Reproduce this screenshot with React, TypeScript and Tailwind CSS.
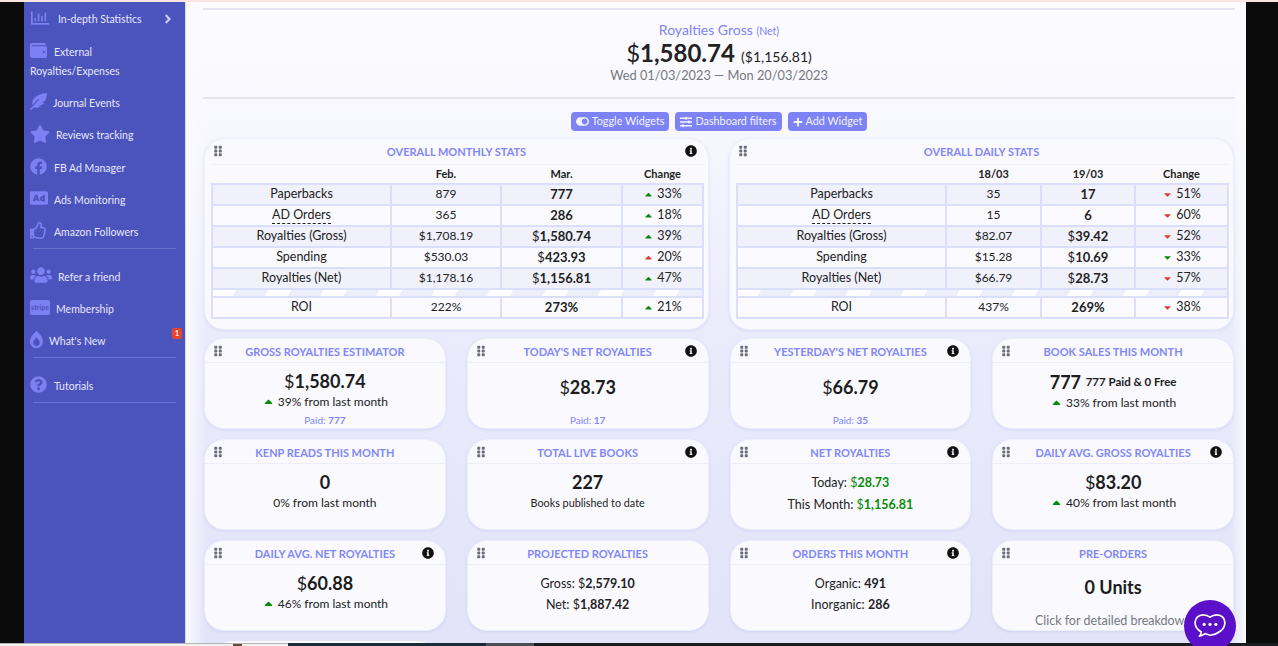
import type { ReactNode } from 'react';
import {
  FaAd,
  FaAngleRight,
  FaBurn,
  FaCaretDown,
  FaCaretUp,
  FaFacebook,
  FaFeatherAlt,
  FaGripVertical,
  FaInfoCircle,
  FaPlus,
  FaQuestionCircle,
  FaRegChartBar,
  FaRegThumbsUp,
  FaSlidersH,
  FaStar,
  FaToggleOn,
  FaUsers,
  FaWallet,
} from 'react-icons/fa';

const Money = ({ v }: { v: string }) => (
  <>
    <span className="font-normal">$</span>
    <b className="font-bold">{v}</b>
  </>
);

const Up = () => <FaCaretUp className="inline size-[13px] text-[#0a8a0a] align-[-2px]" />;

const SideItem = ({
  icon,
  label,
  gap,
  h = 'h-[32px]',
}: {
  icon: ReactNode;
  label: string;
  gap: string;
  h?: string;
}) => (
  <div className={`flex items-center pl-[6px] ${h} ${gap}`}>
    <span className="flex shrink-0 -translate-y-[2px] justify-center text-[#7b80f2]">{icon}</span>
    <span className="mt-[1px] text-[10.5px] text-[#e6e7fb]">{label}</span>
  </div>
);

const Sidebar = () => (
  <aside className="w-[161px] shrink-0 bg-[#4b53bc] pt-[2px] font-['Lato',sans-serif]">
    <div className="flex h-[32px] items-center pl-[7px] pr-[10px] text-[#7b80f2]">
      <FaRegChartBar className="size-[18px] -translate-y-[2px]" />
      <span className="ml-[9px] flex-1 text-[10.5px] text-[#e6e7fb]">In-depth Statistics</span>
      <FaAngleRight className="size-[14px] -translate-y-[1px] text-[#c9cbf8]" />
    </div>
    <div className="h-[51px] pl-[6px] pt-[8px]">
      <div className="flex items-center gap-[7px]">
        <FaWallet className="size-[17px] -translate-y-[2px] text-[#7b80f2]" />
        <span className="text-[10.5px] text-[#e6e7fb]">External</span>
      </div>
      <div className="mt-[3px] text-[10.5px] text-[#e6e7fb]">Royalties/Expenses</div>
    </div>
    <SideItem gap="gap-[6px]" label="Journal Events" icon={<FaFeatherAlt className="size-[17px]" />} />
    <SideItem gap="gap-[6px]" h="h-[33px]" label="Reviews tracking" icon={<FaStar className="size-[20px]" />} />
    <SideItem gap="gap-[7px]" label="FB Ad Manager" icon={<FaFacebook className="size-[17px]" />} />
    <SideItem gap="gap-[6px]" label="Ads Monitoring" icon={<FaAd className="size-[18px]" />} />
    <SideItem gap="gap-[7px]" label="Amazon Followers" icon={<FaRegThumbsUp className="size-[17px]" />} />
    <div className="mx-[9px] mb-[12px] h-px bg-[#6a70cf]" />
    <SideItem gap="gap-[6px]" label="Refer a friend" icon={<FaUsers className="size-[22px]" />} />
    <SideItem
      gap="gap-[6px]"
      label="Membership"
      icon={
        <span className="flex h-[15px] w-[20px] items-center justify-center rounded-[2px] bg-[#7b80f2] text-[7px] font-bold text-[#4b53bc]">
          stripe
        </span>
      }
    />
    <div className="relative">
      <SideItem gap="gap-[6px]" label="What's New" icon={<FaBurn className="h-[19px] w-[13px]" />} />
      <span className="absolute right-[3px] top-[3px] flex h-[11px] w-[10px] items-center justify-center rounded-[2px] bg-[#e8432f] text-[7px] font-bold text-white">
        1
      </span>
    </div>
    <div className="mx-[9px] mb-[12px] h-px bg-[#6a70cf]" />
    <SideItem gap="gap-[7px]" label="Tutorials" icon={<FaQuestionCircle className="size-[17px]" />} />
    <div className="mx-[9px] h-px bg-[#6a70cf]" />
  </aside>
);

const TopButton = ({ icon, label }: { icon: ReactNode; label: string }) => (
  <button className="flex h-[19px] items-center gap-[3px] rounded-[4px] bg-[#7d83f4] px-[5px] text-[10.8px] text-[#f2f3ff]">
    {icon}
    {label}
  </button>
);

type Row = {
  label: string;
  a: ReactNode;
  b: ReactNode;
  pct: string;
  up: boolean;
  good: boolean;
  dotted?: boolean;
};

const monthly: Row[] = [
  { label: 'Paperbacks', a: '879', b: <b>777</b>, pct: '33%', up: true, good: true },
  { label: 'AD Orders', a: '365', b: <b>286</b>, pct: '18%', up: true, good: true, dotted: true },
  { label: 'Royalties (Gross)', a: '$1,708.19', b: <Money v="1,580.74" />, pct: '39%', up: true, good: true },
  { label: 'Spending', a: '$530.03', b: <Money v="423.93" />, pct: '20%', up: true, good: false },
  { label: 'Royalties (Net)', a: '$1,178.16', b: <Money v="1,156.81" />, pct: '47%', up: true, good: true },
];
const daily: Row[] = [
  { label: 'Paperbacks', a: '35', b: <b>17</b>, pct: '51%', up: false, good: false },
  { label: 'AD Orders', a: '15', b: <b>6</b>, pct: '60%', up: false, good: false, dotted: true },
  { label: 'Royalties (Gross)', a: '$82.07', b: <Money v="39.42" />, pct: '52%', up: false, good: false },
  { label: 'Spending', a: '$15.28', b: <Money v="10.69" />, pct: '33%', up: false, good: true },
  { label: 'Royalties (Net)', a: '$66.79', b: <Money v="28.73" />, pct: '57%', up: false, good: false },
];

const Delta = ({ pct, up, good }: { pct: string; up: boolean; good: boolean }) => {
  const color = good ? 'text-[#0a8a0a]' : 'text-[#e0392b]';
  return (
    <span className="inline-flex translate-y-[1px] items-center gap-[3px]">
      {up ? <FaCaretUp className={`size-[11px] ${color}`} /> : <FaCaretDown className={`size-[11px] ${color}`} />}
      {pct}
    </span>
  );
};

const cell = 'border-2 border-[#dcdffc] p-0 text-center font-normal';

const StatTable = ({
  title,
  heads,
  rows,
  roi,
  cols,
  info,
}: {
  title: string;
  heads: string[];
  rows: Row[];
  roi: { a: string; b: string; pct: string; up: boolean };
  cols: string[];
  info?: boolean;
}) => (
  <section className="h-[192px] rounded-[20px] border border-[#eceefb] bg-[#f9f9fe] px-[6px] shadow-[0_1px_3px_rgba(90,90,200,0.12)]">
    <div className="relative flex h-[25px] items-center justify-center pt-[2px]">
      <FaGripVertical className="absolute left-[1px] top-[6px] size-[12px] text-[#6b6d78]" />
      <span className="text-[11px] font-bold uppercase text-[#8187f7]">{title}</span>
      {info && <FaInfoCircle className="absolute right-[5px] top-[6px] size-[12px] text-[#111]" />}
    </div>
    <table className="w-full table-fixed border-collapse text-[12.5px] leading-none text-[#222]">
      <colgroup>
        {cols.map((c) => (
          <col key={c} className={c} />
        ))}
      </colgroup>
      <thead>
        <tr className="h-[19px] border-t border-[#eef0fa]">
          <th />
          {heads.map((h) => (
            <th key={h} className="text-[11px] font-bold">
              {h}
            </th>
          ))}
        </tr>
      </thead>
      <tbody>
        {rows.map((r, i) => (
          <tr key={r.label} className={`h-[21px] ${i % 2 === 0 ? 'bg-[#f0f1fb]' : 'bg-[#fbfbff]'}`}>
            <td className={cell}>
              <span className={r.dotted ? 'border-b border-dashed border-[#222] pb-px' : ''}>{r.label}</span>
            </td>
            <td className={`${cell} text-[12px]`}>{r.a}</td>
            <td className={`${cell} text-[13px]`}>{r.b}</td>
            <td className={cell}>
              <Delta pct={r.pct} up={r.up} good={r.good} />
            </td>
          </tr>
        ))}
        <tr className="h-[8px]">
          <td
            colSpan={4}
            className="border-2 border-[#dcdffc] bg-[repeating-linear-gradient(120deg,#ffffff_0,#ffffff_20px,#eceefa_20px,#eceefa_48px)] p-0"
          />
        </tr>
        <tr className="h-[21px] bg-[#fbfbff]">
          <td className={cell}>ROI</td>
          <td className={`${cell} text-[12px]`}>{roi.a}</td>
          <td className={`${cell} text-[13px]`}>
            <b>{roi.b}</b>
          </td>
          <td className={cell}>
            <Delta pct={roi.pct} up={roi.up} good={roi.up} />
          </td>
        </tr>
      </tbody>
    </table>
  </section>
);

const Card = ({ title, info, children }: { title: string; info?: boolean; children: ReactNode }) => (
  <section className="flex h-[91px] flex-col rounded-[20px] border border-[#eceefb] bg-[#f9f9fe] shadow-[0_1px_3px_rgba(90,90,200,0.12)]">
    <div className="relative flex h-[24px] shrink-0 items-center justify-center border-b border-[#eceef8] pt-[3px]">
      <FaGripVertical className="absolute left-[7px] top-[6px] size-[12px] text-[#6b6d78]" />
      <span className="text-[11px] font-bold uppercase text-[#8187f7]">{title}</span>
      {info && <FaInfoCircle className="absolute right-[11px] top-[6px] size-[12px] text-[#111]" />}
    </div>
    <div className="flex flex-1 flex-col items-center text-[#222]">{children}</div>
  </section>
);

const Big = ({ children }: { children: ReactNode }) => (
  <div className="mt-[8px] text-[18px] leading-[21px] text-[#1c1c1c]">{children}</div>
);
const Sub = ({ children }: { children: ReactNode }) => (
  <div className="text-[12px] leading-[19px]">{children}</div>
);
const Paid = ({ n }: { n: string }) => (
  <div className="mt-[2px] text-[10px] leading-[14px] text-[#8187f7]">
    Paid: <b>{n}</b>
  </div>
);
const Green = ({ v }: { v: string }) => (
  <span className="text-[#0a8a0a]">
    <span className="font-normal">$</span>
    <b>{v}</b>
  </span>
);

const ChatBubble = () => (
  <svg viewBox="0 0 32 32" className="size-[34px]" fill="none" stroke="#fff" strokeWidth="1.6" strokeLinejoin="round">
    <path d="M9.500 5.500c3 0 5 1 6.500 2.200 1.600-1.200 3.600-2.200 6.500-2.200 4.600 0 7.500 3.200 7.500 7.400 0 6.600-7 11-13.500 11.800-2.300-.5-3.500-1-5-1.500-1.400 1-3.200 2-5.500 2.300 1-1 1.700-2.300 1.800-3.900C4.300 19.600 2 16.500 2 12.900 2 8.700 4.900 5.500 9.500 5.500z" />
    <g fill="#fff" stroke="none">
      <circle cx="10.500" cy="14.500" r="1.500" />
      <circle cx="16" cy="14.500" r="1.500" />
      <circle cx="21.500" cy="14.500" r="1.500" />
    </g>
  </svg>
);

export default function App() {
  return (
    <div className="relative flex h-[646px] w-[1278px] flex-col overflow-hidden bg-[#0b0b0b] font-['Lato',sans-serif]">
      <div className="h-[2px] shrink-0 bg-[#fde6e2]" />
      <div className="flex h-[641px] shrink-0 pl-[24px] pr-[32px]">
        <Sidebar />
        <main className="flex-1 overflow-hidden border-l border-[#d9daf5] bg-[linear-gradient(90deg,#fafaff_0,#fafaff00_20px,#fafaff00_calc(100%-14px),#fafaff_100%),linear-gradient(180deg,#fcfcff_0%,#f7f7fe_20%,#ebebfc_50%,#e3e3f9_100%)] pl-[17px] pr-[11px] pt-[6px]">
          <div className="h-[91px] border-y-2 border-[#e4e5f1] pt-[11px] text-center">
            <div className="text-[14px] leading-[18px] text-[#7d83f4]">
              Royalties Gross <span className="text-[10.5px]">(Net)</span>
            </div>
            <div className="text-[24px] leading-[25px] text-[#222]">
              $<b>1,580.74</b> <span className="text-[14px]">($1,156.81)</span>
            </div>
            <div className="-mt-[3px] text-[12.8px] leading-[18px] text-[#77787f]">
              Wed 01/03/2023 — Mon 20/03/2023
            </div>
          </div>
          <div className="mt-[13px] flex justify-center gap-[6px]">
            <TopButton icon={<FaToggleOn className="size-[13px]" />} label="Toggle Widgets" />
            <TopButton icon={<FaSlidersH className="size-[12px]" />} label="Dashboard filters" />
            <TopButton icon={<FaPlus className="size-[10px]" />} label="Add Widget" />
          </div>
          <div className="mt-[7px] grid grid-cols-2 gap-x-[20px] px-px">
            <StatTable
              title="Overall Monthly Stats"
              info
              heads={['Feb.', 'Mar.', 'Change']}
              rows={monthly}
              roi={{ a: '222%', b: '273%', pct: '21%', up: true }}
              cols={['w-[179px]', 'w-[110px]', 'w-[121px]', 'w-[81px]']}
            />
            <StatTable
              title="Overall Daily Stats"
              heads={['18/03', '19/03', 'Change']}
              rows={daily}
              roi={{ a: '437%', b: '269%', pct: '38%', up: false }}
              cols={['w-[209px]', 'w-[95px]', 'w-[94px]', 'w-[93px]']}
            />
          </div>
          <div className="mt-[8px] grid grid-cols-4 gap-x-[21px] gap-y-[10px] px-px">
            <Card title="Gross Royalties Estimator">
              <Big>
                <Money v="1,580.74" />
              </Big>
              <Sub>
                <Up /> 39% from last month
              </Sub>
              <Paid n="777" />
            </Card>
            <Card title="Today's Net Royalties" info>
              <Big>
                <span className="mt-[6px] block">
                  <Money v="28.73" />
                </span>
              </Big>
              <div className="mt-[13px]">
                <Paid n="17" />
              </div>
            </Card>
            <Card title="Yesterday's Net Royalties" info>
              <Big>
                <span className="mt-[6px] block">
                  <Money v="66.79" />
                </span>
              </Big>
              <div className="mt-[13px]">
                <Paid n="35" />
              </div>
            </Card>
            <Card title="Book Sales This Month">
              <Big>
                <b>777</b> <b className="align-[3px] text-[11.5px]">777 Paid &amp; 0 Free</b>
              </Big>
              <Sub>
                <Up /> 33% from last month
              </Sub>
            </Card>
            <Card title="KENP Reads This Month">
              <Big>
                <b>0</b>
              </Big>
              <Sub>0% from last month</Sub>
            </Card>
            <Card title="Total Live Books" info>
              <Big>
                <b>227</b>
              </Big>
              <div className="text-[10.8px] leading-[19px]">Books published to date</div>
            </Card>
            <Card title="Net Royalties" info>
              <div className="mt-[8px] text-[12.5px] leading-[22px]">
                Today: <Green v="28.73" />
              </div>
              <div className="text-[12.5px] leading-[22px]">
                This Month: <Green v="1,156.81" />
              </div>
            </Card>
            <Card title="Daily Avg. Gross Royalties" info>
              <Big>
                <Money v="83.20" />
              </Big>
              <Sub>
                <Up /> 40% from last month
              </Sub>
            </Card>
            <Card title="Daily Avg. Net Royalties" info>
              <Big>
                <Money v="60.88" />
              </Big>
              <Sub>
                <Up /> 46% from last month
              </Sub>
            </Card>
            <Card title="Projected Royalties">
              <div className="mt-[8px] text-[12.5px] leading-[21px]">
                Gross: <Money v="2,579.10" />
              </div>
              <div className="text-[12.5px] leading-[21px]">
                Net: <Money v="1,887.42" />
              </div>
            </Card>
            <Card title="Orders This Month" info>
              <div className="mt-[8px] text-[12.5px] leading-[21px]">
                Organic: <b>491</b>
              </div>
              <div className="text-[12.5px] leading-[21px]">
                Inorganic: <b>286</b>
              </div>
            </Card>
            <Card title="Pre-Orders">
              <div className="mt-[10px] text-[18px] font-bold leading-[24px] text-[#1c1c1c]">0 Units</div>
              <div className="mt-[14px] text-[12.5px] leading-[16px] text-[#77787f]">Click for detailed breakdown</div>
            </Card>
            <div className="mx-[8px] h-[20px] rounded-t-[20px] bg-[#f9f9fe]" />
          </div>
        </main>
      </div>
      <div className="flex h-[3px] shrink-0">
        <div className="relative w-[288px] border-t border-[#b5b5b8] bg-[#f0f0f0]">
          <span className="absolute left-[233px] top-0 h-[2px] w-[9px] bg-[#6b4a35]" />
        </div>
        <div className="w-[198px] bg-[#1c2b3a]" />
        <div className="w-[48px] bg-[#4a4f55]" />
        <div className="flex-1 bg-[#1a1c1f]" />
      </div>
      <button className="absolute left-[1184px] top-[600px] flex size-[52px] items-center justify-center rounded-full bg-[#5b0fc8]">
        <ChatBubble />
      </button>
    </div>
  );
}
